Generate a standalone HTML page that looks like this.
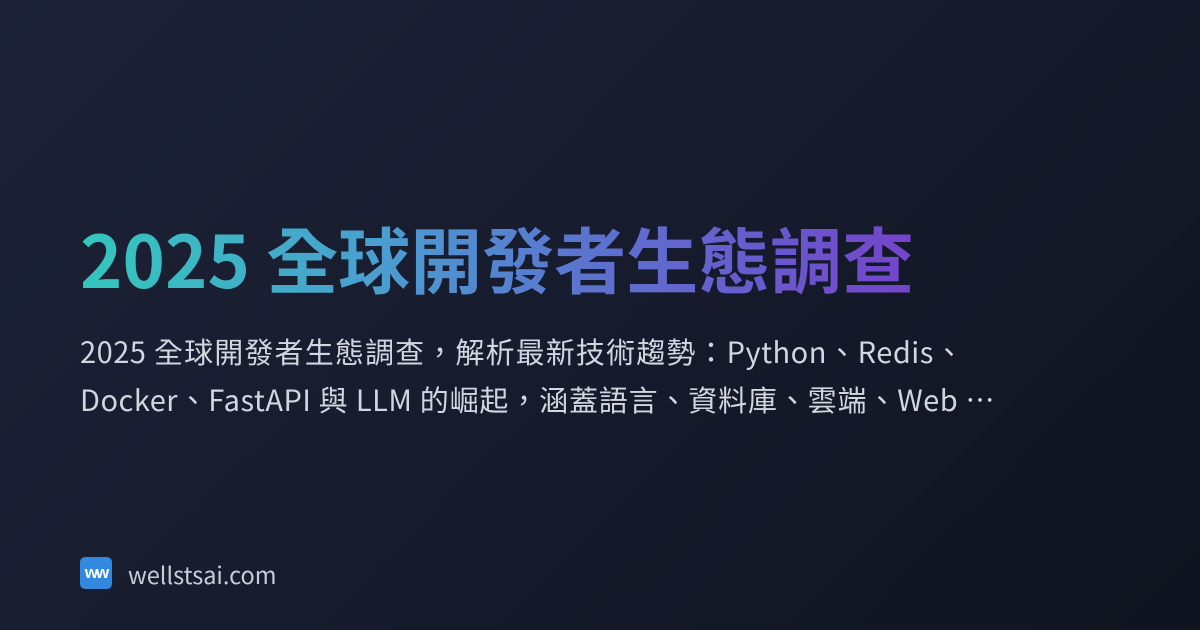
<!DOCTYPE html>
<html lang="zh-Hant"><head><meta charset="utf-8"><style>
html,body{margin:0;padding:0}
body{width:1200px;height:630px;overflow:hidden;background:linear-gradient(135deg,#1d2237 0%,#161b2d 50%,#10141f 100%);font-family:"Liberation Sans","Noto Sans CJK TC",sans-serif;position:relative}
h1{position:absolute;left:80px;top:211px;margin:0;font-family:"Noto Sans CJK TC","Liberation Sans",sans-serif;font-weight:700;font-size:72px;line-height:92px;white-space:nowrap;background:linear-gradient(90deg,#33c7bb 0%,#4a9fd0 35%,#5b74cf 60%,#7444cc 100%);-webkit-background-clip:text;background-clip:text;color:transparent;width:834px}
.l{position:absolute;left:80px;margin:0;font-family:"Noto Sans CJK TC",sans-serif;font-size:29px;letter-spacing:0.5px;line-height:48px;color:#d3d6de;white-space:nowrap;text-align:justify;text-align-last:justify;text-justify:inter-character}
.l1{top:327px;width:884px}
.l2{top:375px;width:915px}
.logo{position:absolute;left:80px;top:557px;width:32px;height:32px;border-radius:5px;background:#3188de;color:#fff;font-size:17px;font-weight:700;text-align:center;line-height:31px;letter-spacing:-2px;font-family:"Liberation Sans",sans-serif}
.site{position:absolute;left:128px;top:558px;font-family:"Noto Sans CJK TC",sans-serif;font-size:23.5px;line-height:32px;color:#c8ccd6}
</style></head><body>
<h1>2025 全球開發者生態調查</h1>
<div class="l l1">2025 全球開發者生態調查，解析最新技術趨勢：Python、Redis、</div>
<div class="l l2">Docker、FastAPI 與 LLM 的崛起，涵蓋語言、資料庫、雲端、Web …</div>
<div class="logo">ww</div>
<div class="site">wellstsai.com</div>
</body></html>
